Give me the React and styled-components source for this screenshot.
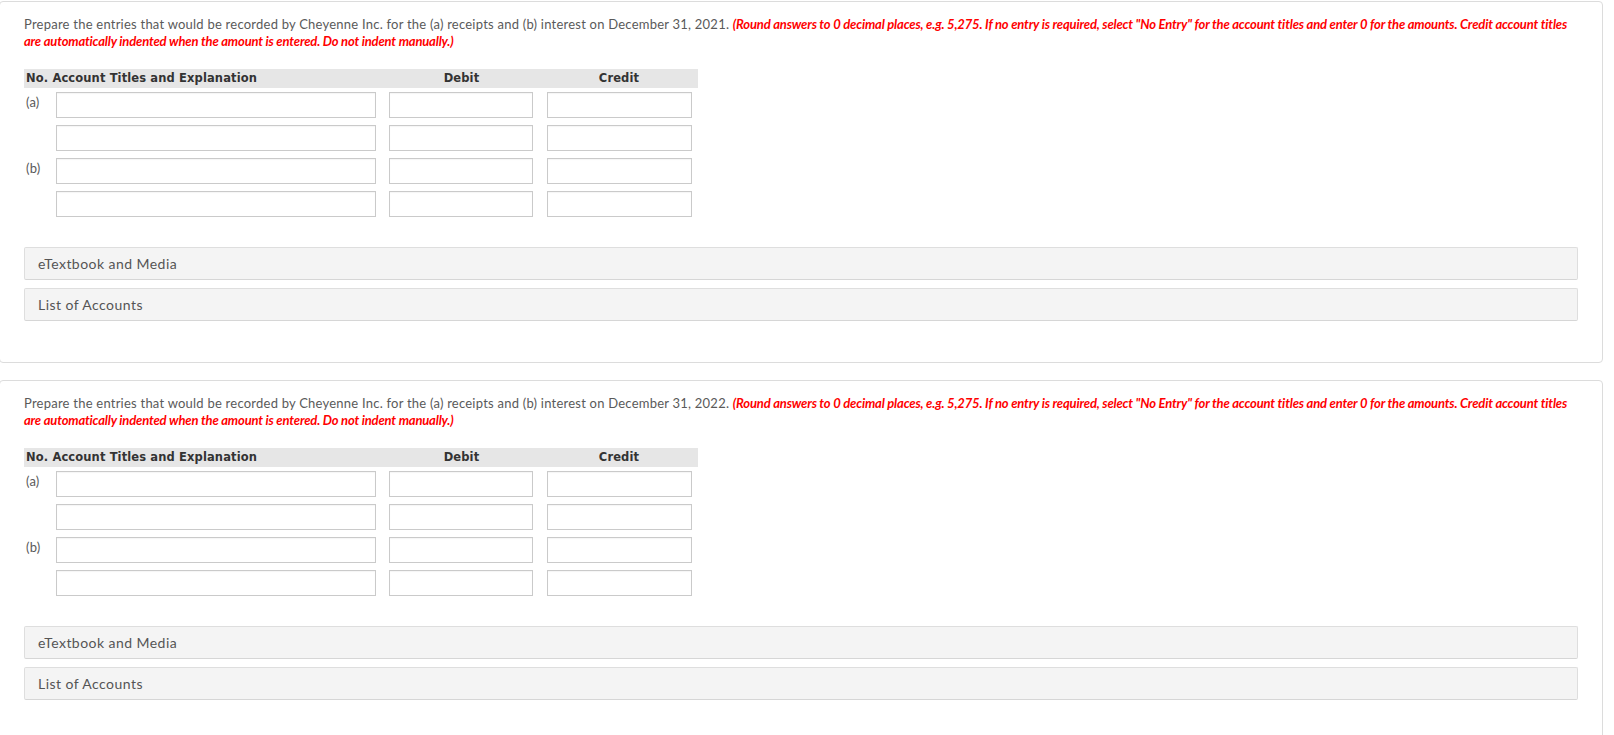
import React from "react";
import styled, { createGlobalStyle } from "styled-components";

const Global = createGlobalStyle`
  html, body { margin: 0; padding: 0; background: #fff; }
  body { font-family: Lato, "Open Sans", sans-serif; color: #555; }
  * { box-sizing: border-box; }
`;

const Page = styled.div`
  padding: 1px 11px 0 0;
  overflow: hidden;
`;

const Card = styled.section`
  margin-left: -1px;
  margin-bottom: 17px;
  border: 1px solid #dcdcdc;
  border-radius: 4px;
  padding: 14px 24px 41px 24px;
  background: #fff;
`;

const Prompt = styled.p`
  margin: 0;
  font-family: Lato, sans-serif;
  font-size: 13px;
  line-height: 17px;
  letter-spacing: 0.23px;
  color: #5a5a5a;
`;

const Note = styled.span`
  color: #f00;
  font-style: italic;
  font-weight: 700;
  letter-spacing: -0.17px;
`;

const Table = styled.div`
  margin-top: 19px;
  width: 674px;
  display: grid;
  grid-template-columns: 32px 327px 157px 158px;
  row-gap: 7px;
`;

const HeadRow = styled.div`
  grid-column: 1 / -1;
  display: grid;
  grid-template-columns: 359px 157px 158px;
  height: 19px;
  background: #e6e6e6;
  margin-bottom: -3px;
  font-family: "DejaVu Sans", Verdana, sans-serif;
  font-weight: 700;
  font-size: 11.5px;
  letter-spacing: 0.12px;
  line-height: 19px;
  color: #333;
`;

const HeadCell = styled.div`
  padding-left: ${(p) => (p.$left ? "2px" : "0")};
  text-align: ${(p) => (p.$left ? "left" : "center")};
  white-space: nowrap;
`;

const Label = styled.div`
  padding: 2px 0 0 2px;
  font-size: 13px;
  line-height: 17px;
  letter-spacing: 0.2px;
  color: #5a5a5a;
`;

const Cell = styled.div`
  padding: ${(p) => p.$pad || "0"};
`;

const Field = styled.input`
  display: block;
  width: 100%;
  height: 26px;
  margin: 0;
  border: 1px solid #cacaca;
  border-radius: 0;
  background: #fff;
  box-shadow: inset 0 1px 1px rgba(0, 0, 0, 0.04);
  font-family: Lato, sans-serif;
  font-size: 13px;
  outline: none;
`;

const Panels = styled.div`
  margin-top: 30px;
  display: flex;
  flex-direction: column;
  gap: 8px;
`;

const Panel = styled.div`
  height: 33px;
  background: #f4f4f4;
  border: 1px solid #dedede;
  border-bottom-color: #d6d6d6;
  border-radius: 2px;
  padding-left: 13px;
  display: flex;
  align-items: center;
  font-family: Lato, sans-serif;
  font-size: 14px;
  letter-spacing: 0.45px;
  color: #555;
`;

const rows = ["(a)", "", "(b)", ""];

function Question({ year }) {
  return (
    <Card>
      <Prompt>
        Prepare the entries that would be recorded by Cheyenne Inc. for the (a) receipts and (b) interest on December 31, {year}.{" "}
        <Note>
          (Round answers to 0 decimal places, e.g. 5,275. If no entry is required, select "No Entry" for the account titles and enter 0 for the amounts. Credit account titles are automatically indented when the amount is entered. Do not indent manually.)
        </Note>
      </Prompt>
      <Table>
        <HeadRow>
          <HeadCell $left>No. Account Titles and Explanation</HeadCell>
          <HeadCell>Debit</HeadCell>
          <HeadCell>Credit</HeadCell>
        </HeadRow>
        {rows.map((r, i) => (
          <React.Fragment key={i}>
            <Label>{r}</Label>
            <Cell $pad="0 7px 0 0"><Field /></Cell>
            <Cell $pad="0 7px 0 6px"><Field /></Cell>
            <Cell $pad="0 6px 0 7px"><Field /></Cell>
          </React.Fragment>
        ))}
      </Table>
      <Panels>
        <Panel>eTextbook and Media</Panel>
        <Panel>List of Accounts</Panel>
      </Panels>
    </Card>
  );
}

export default function App() {
  return (
    <Page>
      <Global />
      <Question year="2021" />
      <Question year="2022" />
    </Page>
  );
}
